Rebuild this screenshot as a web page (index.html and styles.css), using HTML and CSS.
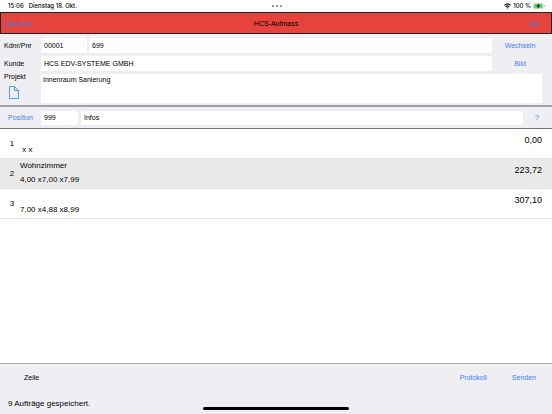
FILE: index.html
```html
<!DOCTYPE html>
<html lang="de">
<head>
    <meta charset="UTF-8">
    <meta name="viewport" content="width=device-width, initial-scale=1.0">
    <title>HCS-Aufmass</title>
    <link rel="stylesheet" href="styles.css">
</head>
<body>

    <div class="status-bar">
        <div class="status-left"><span>15:06</span><span>Dienstag 18. Okt.</span></div>
        <div class="status-dots"><i></i><i></i><i></i></div>
        <div class="status-right">
            <svg width="7" height="6" viewBox="0 0 14 12" fill="none" stroke="#111" stroke-width="2.2">
                <path d="M1 4.500C4.500 1 9.500 1 13 4.500M3.500 7.500C5.500 5.500 8.500 5.500 10.500 7.500"/>
                <path d="M5 9L7 11.500L9 9Q7 7.500 5 9Z" fill="#111" stroke="none"/>
            </svg>
            <span>100 %</span>
            <svg width="12" height="6" viewBox="0 0 24 12">
                <rect x="0.500" y="0.500" width="20" height="11" rx="3.500" fill="#d9f2dc" stroke="#a9b8ab"/>
                <rect x="2" y="2" width="17" height="8" rx="2" fill="#5fd36f"/>
                <path d="M12.500 0L6.500 7H10L8.500 12L14.500 5H11Z" fill="#111"/>
                <path d="M22 4V8Q23.500 7.500 23.500 6T22 4Z" fill="#999"/>
            </svg>
        </div>
    </div>

    <header class="header">
        <button type="button">Optionen</button>
        <h1>HCS-Aufmass</h1>
        <button type="button">Akt.</button>
    </header>

    <form class="order">
        <div class="form-row">
            <label for="kdnr">Kdnr/Pnr</label>
            <input id="kdnr" class="short" type="text" value="00001">
            <input class="grow" type="text" value="699" aria-label="Pnr">
            <button type="button">Wechseln</button>
        </div>
        <div class="form-row">
            <label for="kunde">Kunde</label>
            <input id="kunde" class="grow" type="text" value="HCS EDV-SYSTEME GMBH">
            <button type="button">Bild</button>
        </div>
        <div class="form-row project">
            <div class="project-side">
                <label for="projekt">Projekt</label>
                <button type="button" class="file-button" aria-label="Datei">
                    <svg width="10" height="13" viewBox="0 0 10 13" fill="none" stroke="#4b8df8" stroke-width="0.900">
                        <path d="M0.500 0.500H5.500L9.500 4.500V12.500H0.500ZM5.500 0.500V4.500H9.500"/>
                    </svg>
                </button>
            </div>
            <textarea id="projekt" class="grow">Innenraum Sanierung</textarea>
        </div>
    </form>

    <form class="position">
        <button type="button" class="position-button">Position</button>
        <input class="number" type="text" value="999" aria-label="Positionsnummer">
        <input class="grow" type="text" value="Infos" aria-label="Infos">
        <button type="button" class="help">?</button>
    </form>

    <main class="list">
        <table>
            <tbody>
                <tr>
                    <td class="nr">1</td>
                    <td class="text"><div class="title"></div><div class="size">&nbsp;x x</div></td>
                    <td class="sum">0,00</td>
                </tr>
                <tr class="selected">
                    <td class="nr">2</td>
                    <td class="text"><div class="title">Wohnzimmer</div><div class="size">4,00 x7,00 x7,99</div></td>
                    <td class="sum">223,72</td>
                </tr>
                <tr>
                    <td class="nr">3</td>
                    <td class="text"><div class="title"></div><div class="size">7,00 x4,88 x8,99</div></td>
                    <td class="sum">307,10</td>
                </tr>
            </tbody>
        </table>
    </main>

    <footer class="footer">
        <div class="footer-row">
            <span class="zeile">Zeile</span>
            <button type="button">Protokoll</button>
            <button type="button">Senden</button>
        </div>
        <p class="message">9 Aufträge gespeichert.</p>
        <div class="home-bar"></div>
    </footer>

</body>
</html>
```

FILE: styles.css
```css
* {
    box-sizing: border-box;
}

body {
    margin: 0;
    min-height: 100vh;
    display: flex;
    flex-direction: column;
    background: #fff;
    color: #000;
    font-family: "Liberation Sans", Arial, sans-serif;
    font-size: 7px;
    line-height: 10px;
}

button {
    padding: 0;
    border: none;
    background: none;
    color: #3b82f7;
    font: inherit;
    cursor: pointer;
}

input,
textarea {
    display: block;
    min-width: 0;
    height: 14px;
    margin: 0;
    padding: 0 3px;
    border: none;
    border-radius: 2px;
    background: #fff;
    color: #000;
    font: inherit;
}

.grow {
    flex: 1;
}

/* status bar */
.status-bar {
    display: grid;
    grid-template-columns: 1fr auto 1fr;
    align-items: center;
    height: 12px;
    padding: 0 7px 0 8px;
}

.status-left,
.status-right {
    display: flex;
    align-items: center;
    font-family: Inter, "Liberation Sans", sans-serif;
    font-size: 6px;
    font-weight: 500;
}

.status-left {
    gap: 5px;
}

.status-right {
    justify-content: flex-end;
    gap: 2px;
}

.status-dots {
    display: flex;
    gap: 2px;
}

.status-dots i {
    width: 2px;
    height: 2px;
    border-radius: 50%;
    background: #777;
}

/* red title bar */
.header {
    display: grid;
    grid-template-columns: 1fr auto 1fr;
    align-items: center;
    height: 22px;
    padding: 1px 10px 0 3px;
    border: 1px solid #222;
    background: #e5433b;
}

.header h1 {
    margin: 0;
    padding-left: 7px;
    font-size: 7px;
    font-weight: normal;
}

.header button {
    justify-self: start;
    color: #4a72d8;
}

.header button:last-child {
    justify-self: end;
}

/* order form */
.order {
    display: flex;
    flex-direction: column;
    gap: 3px;
    padding: 4px 10px 2px 4px;
    border-bottom: 2px solid #a0a0a3;
    background: #efeef3;
}

.form-row {
    display: flex;
    align-items: center;
    gap: 2px;
}

.form-row label {
    width: 35px;
}

.form-row button {
    width: 48px;
    padding-left: 4px;
}

.form-row input {
    height: 15px;
}

.form-row .short {
    width: 46px;
}

.project {
    align-items: flex-start;
}

.project-side {
    display: flex;
    flex-direction: column;
    gap: 5px;
    width: 35px;
}

.project-side label {
    line-height: 6px;
}

.project-side .file-button {
    width: 20px;
    height: 14px;
    padding: 0;
    line-height: 0;
}

textarea {
    height: 29px;
    padding: 1px 2px;
    border-radius: 0;
    resize: none;
}

/* position bar */
.position {
    display: flex;
    align-items: center;
    gap: 3px;
    height: 22px;
    border-bottom: 1px solid #777;
    background: #efeef3;
}

.position-button {
    width: 38px;
    padding-left: 3px;
}

.position .number {
    width: 37px;
}

.position .help {
    width: 26px;
    padding-right: 4px;
}

/* list of measurements */
.list {
    flex: 1;
}

.list table {
    width: 100%;
    border-spacing: 0;
    font-size: 8px;
}

.list td {
    height: 30px;
    padding: 0;
    border-bottom: 1px solid #e2e2e2;
    vertical-align: middle;
}

.list .selected {
    background: #eaeaea;
}

.list .nr {
    width: 20px;
    padding-left: 4px;
    text-align: center;
}

.list .title {
    height: 14px;
}

.list .size {
    height: 12px;
}

.list .sum {
    padding: 6px 10px 0 0;
    font-size: 9px;
    text-align: right;
    vertical-align: top;
}

/* footer */
.footer {
    height: 51px;
    padding-top: 9px;
    border-top: 1px solid #aaa;
    background: #efeef3;
}

.footer-row {
    display: flex;
    gap: 25px;
    padding: 0 16px 0 24px;
}

.zeile {
    flex: 1;
}

.message {
    margin: 17px 0 0;
    padding-left: 8px;
    font-size: 8px;
    line-height: 7px;
}

.home-bar {
    width: 146px;
    height: 3px;
    margin: 0 auto;
    border-radius: 2px;
    background: #000;
}
```
